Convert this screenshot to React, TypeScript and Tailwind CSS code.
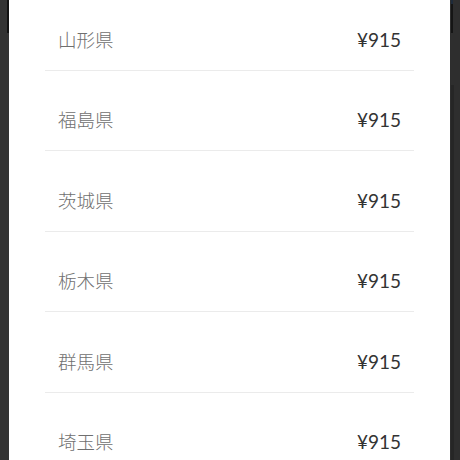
import React from "react";

const rows = ["山形県", "福島県", "茨城県", "栃木県", "群馬県", "埼玉県", "千葉県"];

export default function App() {
  return (
    <div className="relative w-[460px] h-[460px] overflow-hidden bg-[#333333] flex">
      <div className="w-[9px] shrink-0 bg-[#333333]" />
      <div className="w-[441px] shrink-0 h-full bg-white overflow-hidden">
        <div className="px-[36px] -mt-[10px]">
          {rows.map((name) => (
            <div
              key={name}
              className="box-border h-[80.5px] border-b border-[#ebebeb] flex items-center justify-between pt-[19px] px-[13px]"
            >
              <span
                className="text-[18.5px] leading-[27px] font-light text-[#6f6f6f]"
                style={{ fontFamily: '"Noto Sans CJK JP", "Noto Sans", sans-serif' }}
              >
                {name}
              </span>
              <span
                className="text-[19px] leading-[27px] text-[#333333]"
                style={{ fontFamily: 'Lato, "Noto Sans CJK JP", sans-serif' }}
              >
                ¥915
              </span>
            </div>
          ))}
        </div>
      </div>
      <div className="w-[10px] shrink-0 h-full bg-[#2e2e2e]" />
      <div className="absolute left-[7px] top-0 w-[2px] h-[33px] bg-[#111111]" />
      <div className="absolute left-[451px] top-0 w-[2px] h-[33px] bg-[#151515]" />
      <div className="absolute left-[451px] top-0 w-[2px] h-[4px] bg-[#1d2a3a]" />
      <div className="absolute left-[451px] top-[85px] w-[3px] h-[375px] bg-[#262626]" />
    </div>
  );
}
